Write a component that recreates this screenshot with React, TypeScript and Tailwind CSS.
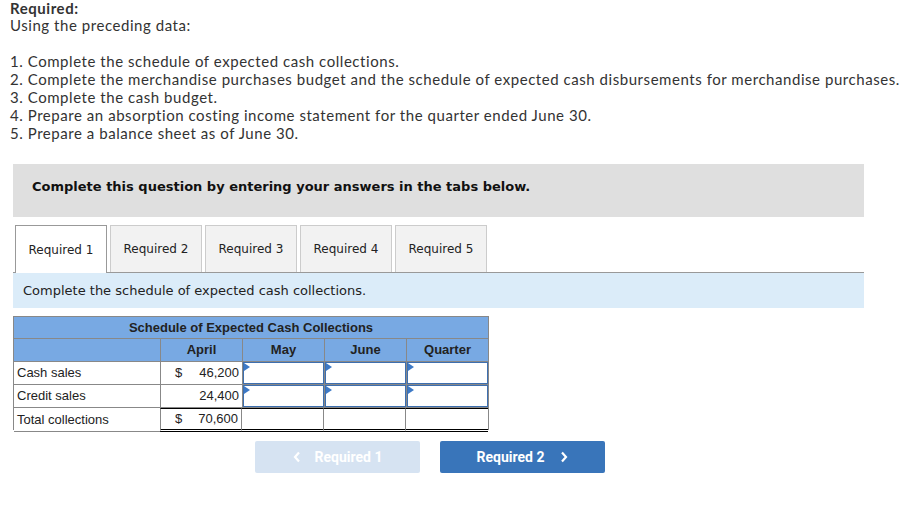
import React from "react";

const tabs = ["Required 1", "Required 2", "Required 3", "Required 4", "Required 5"];

function InputCell() {
  return (
    <div className="relative h-full border-[1.5px] border-[#3d6fb0] bg-white">
      <div className="absolute left-0 top-0 h-0 w-0 border-y-[4px] border-l-[6px] border-y-transparent border-l-[#3d79c6]" />
    </div>
  );
}

export default function App() {
  return (
    <div className="relative h-[507px] w-[908px] overflow-hidden bg-white">
      <div className="pl-[10px] text-[15px] leading-[18px] tracking-[0.55px] text-[#333]" style={{ fontFamily: "Lato, 'Open Sans', sans-serif" }}>
        <div className="font-bold leading-[16px]">Required:</div>
        <div>Using the preceding data:</div>
        <div className="h-[18px]" />
        <div>1. Complete the schedule of expected cash collections.</div>
        <div>2. Complete the merchandise purchases budget and the schedule of expected cash disbursements for merchandise purchases.</div>
        <div>3. Complete the cash budget.</div>
        <div>4. Prepare an absorption costing income statement for the quarter ended June 30.</div>
        <div>5. Prepare a balance sheet as of June 30.</div>
      </div>

      <div className="ml-[13px] mt-[22px] w-[851px]">
        <div className="h-[53px] bg-[#dfdfdf] pl-[19px] pt-[15px] text-[13px] font-bold leading-[15px] text-[#111]" style={{ fontFamily: "'DejaVu Sans', Verdana, sans-serif" }}>
          Complete this question by entering your answers in the tabs below.
        </div>

        <div className="mt-[8px] flex gap-[3px] border-b border-[#999] pl-[2px]" style={{ fontFamily: "'DejaVu Sans', Verdana, sans-serif" }}>
          {tabs.map((t, i) => (
            <div
              key={t}
              className={
                i === 0
                  ? "-mb-px flex h-[48px] w-[92px] items-center justify-center border border-b-0 border-[#999] bg-white text-[12px] text-[#222]"
                  : "flex h-[47px] w-[92px] items-center justify-center border border-b-0 border-[#ccc] bg-[#f2f2f2] text-[12px] text-[#222]"
              }
            >
              {t}
            </div>
          ))}
        </div>

        <div className="flex h-[35px] items-center bg-[#dbecf9] pl-[10px] text-[13px] text-[#222]" style={{ fontFamily: "'DejaVu Sans', Verdana, sans-serif" }}>
          Complete the schedule of expected cash collections.
        </div>

        <div className="mt-[8px] w-[476px] border border-b-0 border-[#888] text-[13px] text-[#222]" style={{ fontFamily: "'Liberation Sans', Arial, sans-serif" }}>
          <div className="flex h-[22px] items-center justify-center border-b border-[#888] bg-[#78a9e3] font-bold">
            Schedule of Expected Cash Collections
          </div>
          <div className="grid h-[22px] grid-cols-[146px_82px_82px_82px_82px] bg-[#78a9e3] font-bold">
            <div />
            <div className="flex items-center justify-center border-l border-[#888]">April</div>
            <div className="flex items-center justify-center border-l border-[#888]">May</div>
            <div className="flex items-center justify-center border-l border-[#888]">June</div>
            <div className="flex items-center justify-center border-l border-[#888]">Quarter</div>
          </div>
          <div className="grid h-[23px] grid-cols-[146px_82px_82px_82px_82px] border-t border-[#888]">
            <div className="flex items-center pl-[3px]">Cash sales</div>
            <div className="flex items-center justify-between border-l border-[#888] pl-[14px] pr-[3px]">
              <span>$</span>
              <span>46,200</span>
            </div>
            <div className="border-l border-[#888]"><InputCell /></div>
            <div className="border-l border-[#888]"><InputCell /></div>
            <div className="border-l border-[#888]"><InputCell /></div>
          </div>
          <div className="grid h-[23px] grid-cols-[146px_82px_82px_82px_82px] border-t border-[#888]">
            <div className="flex items-center pl-[3px]">Credit sales</div>
            <div className="flex items-center justify-end border-l border-[#888] pr-[3px]">24,400</div>
            <div className="border-l border-[#888]"><InputCell /></div>
            <div className="border-l border-[#888]"><InputCell /></div>
            <div className="border-l border-[#888]"><InputCell /></div>
          </div>
          <div className="grid h-[23px] grid-cols-[146px_82px_82px_82px_82px] border-t border-[#888]">
            <div className="flex items-center border-b border-[#888] pl-[3px]">Total collections</div>
            <div className="flex items-center justify-between border-x border-t border-x-[#888] border-t-black border-b-[3px] border-b-black pl-[14px] pr-[3px]" style={{ borderBottomStyle: "double" }}>
              <span>$</span>
              <span>70,600</span>
            </div>
            <div className="border-r border-t border-r-[#888] border-t-black border-b-[3px] border-b-black" style={{ borderBottomStyle: "double" }} />
            <div className="border-r border-t border-r-[#888] border-t-black border-b-[3px] border-b-black" style={{ borderBottomStyle: "double" }} />
            <div className="border-t border-t-black border-b-[3px] border-b-black" style={{ borderBottomStyle: "double" }} />
          </div>
        </div>

        <div className="ml-[242px] mt-[11px] flex gap-[20px] text-[14px] font-bold text-white" style={{ fontFamily: "Roboto, 'Liberation Sans', sans-serif" }}>
          <div className="flex h-[32px] w-[165px] items-center justify-center gap-[14px] rounded-[2px] bg-[#d6e3f2]">
            <svg width="8" height="12" viewBox="0 0 8 12"><path d="M6 1.5 L2 6 L6 10.5" stroke="white" strokeWidth="2.2" fill="none" /></svg>
            <span>Required 1</span>
          </div>
          <div className="flex h-[32px] w-[165px] items-center justify-center gap-[16px] rounded-[2px] bg-[#3975ba]">
            <span>Required 2</span>
            <svg width="8" height="12" viewBox="0 0 8 12"><path d="M2 1.5 L6 6 L2 10.5" stroke="white" strokeWidth="2.2" fill="none" /></svg>
          </div>
        </div>
      </div>
    </div>
  );
}
